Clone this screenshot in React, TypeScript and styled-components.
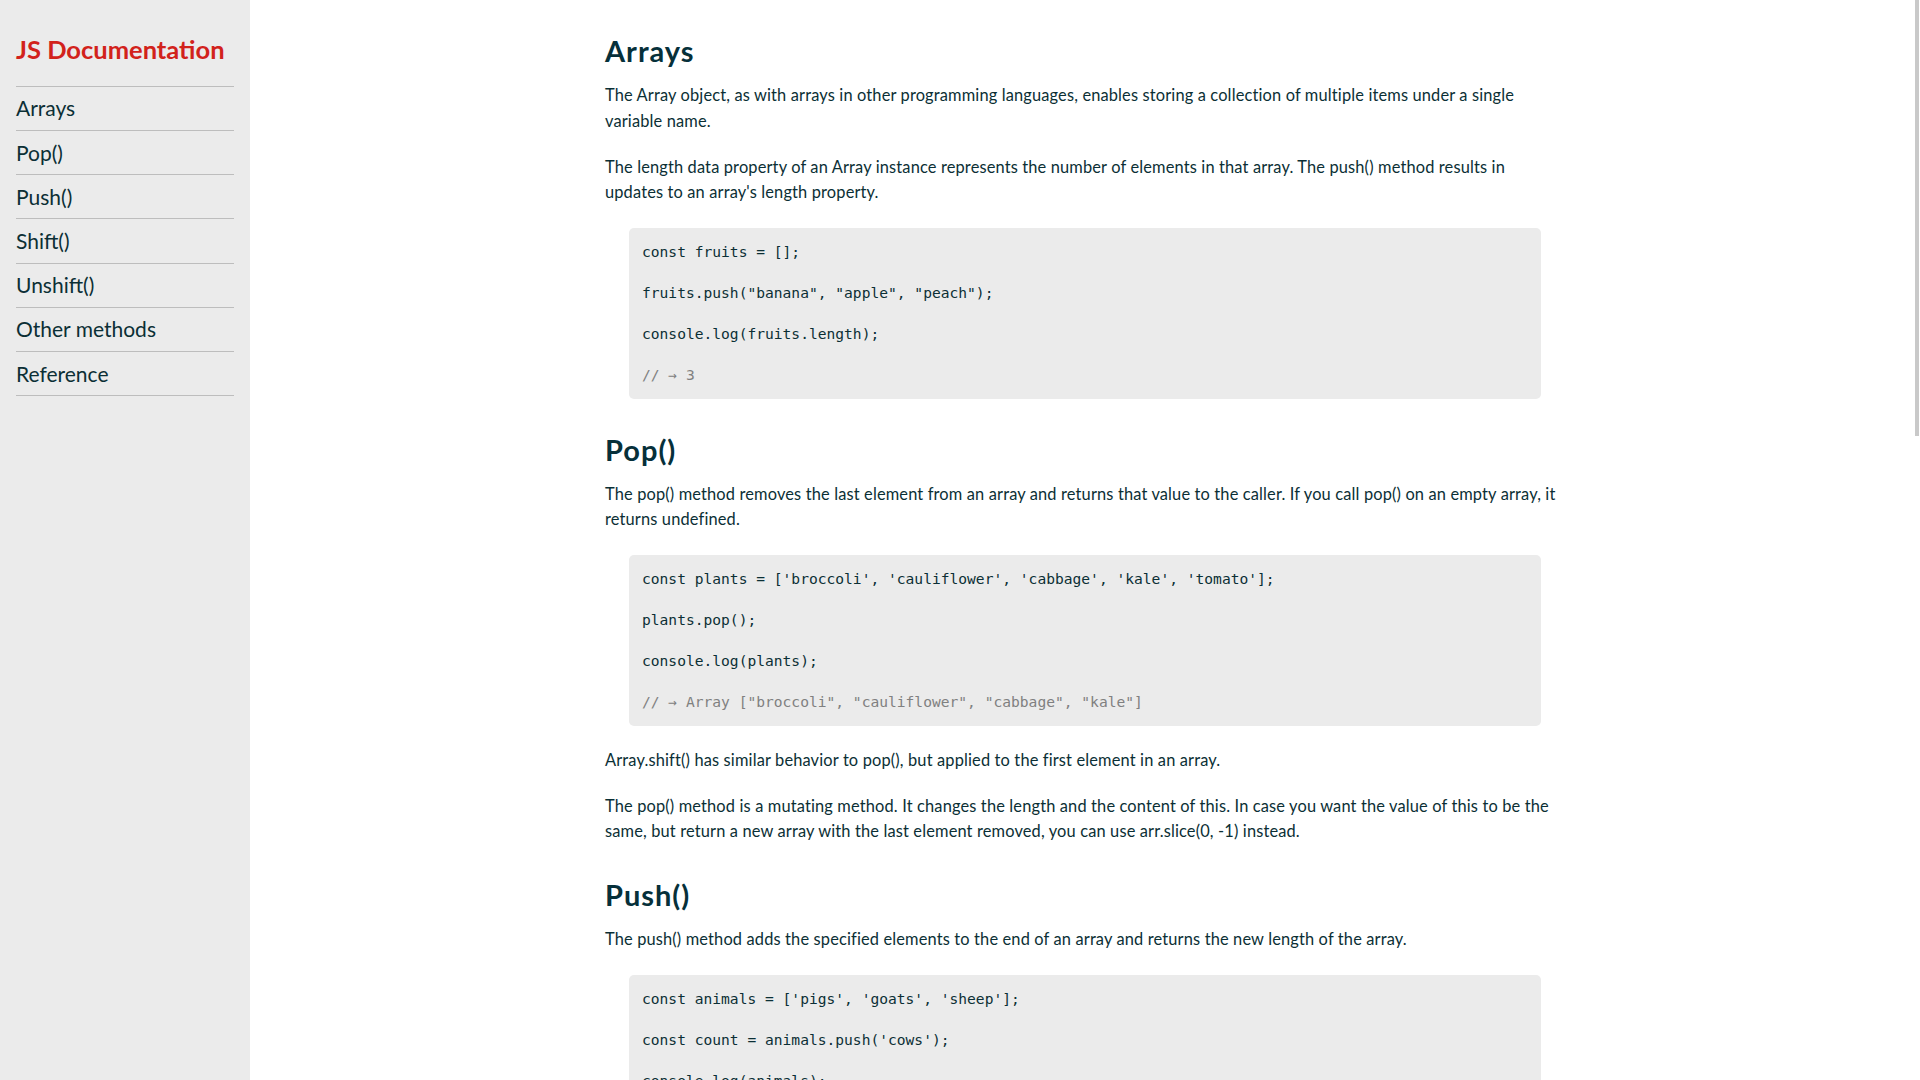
import React from "react";
import styled, { createGlobalStyle } from "styled-components";

const GlobalStyle = createGlobalStyle`
  html, body {
    margin: 0;
    padding: 0;
    height: 100%;
    overflow: hidden;
  }
  body {
    font-family: "Lato", "Noto Sans", sans-serif;
    color: #0b2f35;
    background: #ffffff;
  }
  * { box-sizing: border-box; }
`;

const Page = styled.div`
  position: relative;
  display: grid;
  grid-template-columns: 250px 1fr;
  height: 100vh;
`;

const Sidebar = styled.nav`
  background: #ebebeb;
  padding: 35px 16px 0;
  overflow: hidden;
`;

const Brand = styled.h1`
  margin: 0 0 22px;
  font-size: 25.5px;
  line-height: 28.8px;
  font-weight: 700;
  color: #d2221b;
  white-space: nowrap;
`;

const NavList = styled.ul`
  list-style: none;
  margin: 0;
  padding: 0;
  border-top: 1px solid #bdbdbd;
`;

const NavItem = styled.li`
  border-bottom: 1px solid #bdbdbd;
`;

const NavLink = styled.a`
  display: block;
  padding: 9.6px 0;
  font-size: 21px;
  line-height: 24px;
  color: #0b2f35;
  text-decoration: none;
`;

const Main = styled.main`
  overflow-y: auto;
  height: 100vh;
  scrollbar-width: none;
`;

const ScrollThumb = styled.div`
  position: absolute;
  top: 0;
  right: 1px;
  width: 4px;
  height: 436px;
  background: #c9c9c9;
  pointer-events: none;
`;

const Content = styled.article`
  max-width: 960px;
  margin: 0 auto;
  padding-bottom: 160px;
`;

const Heading = styled.h2`
  margin: 34px 0 14.5px;
  font-size: 29px;
  line-height: 33.6px;
  letter-spacing: 1px;
  font-weight: 700;
  color: #06303a;
`;

const Text = styled.p`
  margin: 0 0 20.5px;
  font-size: 16.4px;
  line-height: 25.6px;
  letter-spacing: 0.15px;
`;

const CodeBlock = styled.pre`
  margin: 23.5px 24px 21px;
  padding: 14px 13px 13px;
  background: #ebebeb;
  border-radius: 5px;
  display: flex;
  flex-direction: column;
  gap: 20.4px;
  font-family: "DejaVu Sans Mono", "Liberation Mono", monospace;
  font-size: 14.6px;
  line-height: 20.5px;
  color: #0b2f35;
  white-space: pre;
`;

const CodeLine = styled.code<{ $comment?: boolean }>`
  display: block;
  font-family: inherit;
  color: ${(p) => (p.$comment ? "#808080" : "inherit")};
`;

const Code: React.FC<{ lines: string[] }> = ({ lines }) => (
  <CodeBlock>
    {lines.map((l, i) => (
      <CodeLine key={i} $comment={l.startsWith("//")}>
        {l}
      </CodeLine>
    ))}
  </CodeBlock>
);

const navItems = [
  "Arrays",
  "Pop()",
  "Push()",
  "Shift()",
  "Unshift()",
  "Other methods",
  "Reference",
];

export default function App() {
  return (
    <>
      <GlobalStyle />
      <Page>
        <Sidebar>
          <Brand>JS Documentation</Brand>
          <NavList>
            {navItems.map((item) => (
              <NavItem key={item}>
                <NavLink href={`#${item}`}>{item}</NavLink>
              </NavItem>
            ))}
          </NavList>
        </Sidebar>
        <Main>
          <Content>
            <section id="Arrays">
              <Heading>Arrays</Heading>
              <Text>
                The Array object, as with arrays in other programming languages,
                enables storing a collection of multiple items under a single
                variable name.
              </Text>
              <Text>
                The length data property of an Array instance represents the
                number of elements in that array. The push() method results in
                updates to an array's length property.
              </Text>
              <Code
                lines={[
                  "const fruits = [];",
                  'fruits.push("banana", "apple", "peach");',
                  "console.log(fruits.length);",
                  "// \u2192 3",
                ]}
              />
            </section>
            <section id="Pop()">
              <Heading>Pop()</Heading>
              <Text>
                The pop() method removes the last element from an array and
                returns that value to the caller. If you call pop() on an empty
                array, it returns undefined.
              </Text>
              <Code
                lines={[
                  "const plants = ['broccoli', 'cauliflower', 'cabbage', 'kale', 'tomato'];",
                  "plants.pop();",
                  "console.log(plants);",
                  '// \u2192 Array ["broccoli", "cauliflower", "cabbage", "kale"]',
                ]}
              />
              <Text>
                Array.shift() has similar behavior to pop(), but applied to the
                first element in an array.
              </Text>
              <Text>
                The pop() method is a mutating method. It changes the length and
                the content of this. In case you want the value of this to be
                the same, but return a new array with the last element removed,
                you can use arr.slice(0, -1) instead.
              </Text>
            </section>
            <section id="Push()">
              <Heading>Push()</Heading>
              <Text>
                The push() method adds the specified elements to the end of an
                array and returns the new length of the array.
              </Text>
              <Code
                lines={[
                  "const animals = ['pigs', 'goats', 'sheep'];",
                  "const count = animals.push('cows');",
                  "console.log(animals);",
                  '// \u2192 Array ["pigs", "goats", "sheep", "cows"]',
                ]}
              />
              <Text>
                The push() method is a mutating method. It changes the length
                and the content of this. In case you want the value of this to
                be the same, but return a new array with elements appended to
                the end, you can use arr.concat([element0, element1, /* ... ,*/
                elementN]) instead.
              </Text>
            </section>
            <section id="Shift()">
              <Heading>Shift()</Heading>
              <Text>
                The shift() method removes the first element from an array and
                returns that removed element. This method changes the length of
                the array.
              </Text>
              <Code
                lines={[
                  "const array1 = [1, 2, 3];",
                  "const firstElement = array1.shift();",
                  "console.log(array1);",
                  "// \u2192 Array [2, 3]",
                ]}
              />
              <Text>
                The shift() method removes the element at the zeroth index and
                shifts the values at consecutive indexes down, then returns the
                removed value. If the length property is 0, undefined is
                returned.
              </Text>
            </section>
            <section id="Unshift()">
              <Heading>Unshift()</Heading>
              <Text>
                The unshift() method adds the specified elements to the
                beginning of an array and returns the new length of the array.
              </Text>
              <Code
                lines={[
                  "const array1 = [1, 2, 3];",
                  "console.log(array1.unshift(4, 5));",
                  "// \u2192 5",
                  "console.log(array1);",
                  "// \u2192 Array [4, 5, 1, 2, 3]",
                ]}
              />
            </section>
            <section id="Other methods">
              <Heading>Other methods</Heading>
              <Text>
                Arrays also provide many other useful methods, such as concat(),
                slice(), splice(), indexOf(), includes(), map(), filter() and
                reduce(). Each of them either returns a new array or modifies
                the array in place.
              </Text>
            </section>
            <section id="Reference">
              <Heading>Reference</Heading>
              <Text>
                All the documentation in this page is taken from MDN Web Docs.
              </Text>
            </section>
          </Content>
        </Main>
        <ScrollThumb />
      </Page>
    </>
  );
}
